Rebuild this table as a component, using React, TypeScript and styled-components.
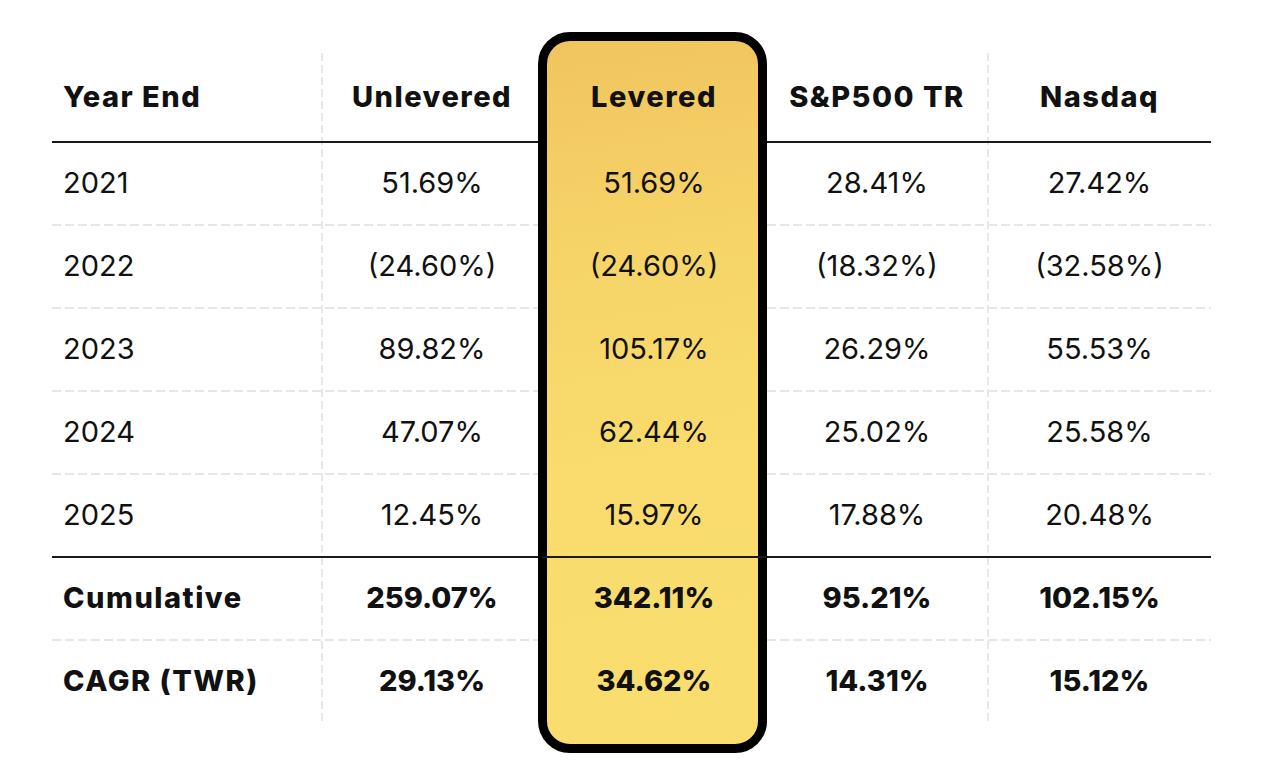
import React from 'react';
import styled, { createGlobalStyle } from 'styled-components';

const GlobalStyle = createGlobalStyle`
  html, body {
    margin: 0;
    padding: 0;
    background: #ffffff;
  }
  body {
    font-family: Inter, "Open Sans", "Liberation Sans", sans-serif;
    color: #111111;
  }
`;

const Page = styled.div`
  width: 1264px;
  height: 776px;
  padding: 53px 0 0 52px;
  box-sizing: border-box;
`;

const Table = styled.div`
  position: relative;
  width: 1159px;
  background-image:
    repeating-linear-gradient(to bottom, #e8e8e8 0 8px, transparent 8px 12px),
    repeating-linear-gradient(to bottom, #e8e8e8 0 8px, transparent 8px 12px);
  background-size: 2px 100%, 2px 100%;
  background-position: 269px 0, 935px 0;
  background-repeat: no-repeat;
`;

const Highlight = styled.div`
  position: absolute;
  left: 486px;
  top: -21px;
  width: 229px;
  height: 721px;
  box-sizing: border-box;
  border: 9px solid #000000;
  border-radius: 32px;
  background: linear-gradient(172deg, #f1c45e 0%, #f6d468 30%, #f9dc6d 60%, #f9dd6f 100%);
  z-index: 1;
`;

type LineKind = 'dashed' | 'solid' | 'none';

const lineImage = (kind: LineKind) => {
  if (kind === 'solid') return 'linear-gradient(#1a1a1a, #1a1a1a)';
  if (kind === 'dashed')
    return 'repeating-linear-gradient(to right, #e6e6e6 0 9px, transparent 9px 13px)';
  return 'none';
};

const Row = styled.div<{ $line: LineKind; $head?: boolean }>`
  display: grid;
  grid-template-columns: 270px 220px 224px 222px 223px;
  height: ${(p) => (p.$head ? 90 : 83)}px;
  background-image: ${(p) => lineImage(p.$line)};
  background-size: 100% 2px;
  background-position: 0 100%;
  background-repeat: no-repeat;
`;

const Cell = styled.div<{ $bold?: boolean; $label?: boolean; $first?: boolean; $rule?: boolean }>`
  position: relative;
  z-index: 2;
  display: flex;
  align-items: center;
  justify-content: ${(p) => (p.$first ? 'flex-start' : 'center')};
  padding-left: ${(p) => (p.$first ? '11px' : '0')};
  padding-bottom: 4px;
  font-size: 29px;
  line-height: 1;
  font-weight: ${(p) => (p.$bold ? 800 : 400)};
  letter-spacing: ${(p) => (p.$bold && p.$label ? '1.5px' : '0')};
  color: #111111;
  white-space: nowrap;
  box-shadow: ${(p) => (p.$rule ? 'inset 0 -2px 0 #1a1a1a' : 'none')};
`;

const headers = ['Year End', 'Unlevered', 'Levered', 'S&P500 TR', 'Nasdaq'];

type RowData = { label: string; values: string[]; bold?: boolean; line: LineKind };

const rows: RowData[] = [
  { label: '2021', values: ['51.69%', '51.69%', '28.41%', '27.42%'], line: 'dashed' },
  { label: '2022', values: ['(24.60%)', '(24.60%)', '(18.32%)', '(32.58%)'], line: 'dashed' },
  { label: '2023', values: ['89.82%', '105.17%', '26.29%', '55.53%'], line: 'dashed' },
  { label: '2024', values: ['47.07%', '62.44%', '25.02%', '25.58%'], line: 'dashed' },
  { label: '2025', values: ['12.45%', '15.97%', '17.88%', '20.48%'], line: 'solid' },
  { label: 'Cumulative', values: ['259.07%', '342.11%', '95.21%', '102.15%'], bold: true, line: 'dashed' },
  { label: 'CAGR (TWR)', values: ['29.13%', '34.62%', '14.31%', '15.12%'], bold: true, line: 'none' },
];

const App: React.FC = () => {
  return (
    <>
      <GlobalStyle />
      <Page>
        <Table>
          <Highlight />
          <Row $line="solid" $head>
            {headers.map((h, i) => (
              <Cell key={h} $bold $label $first={i === 0}>
                {h}
              </Cell>
            ))}
          </Row>
          {rows.map((r) => (
            <Row key={r.label} $line={r.line}>
              <Cell $first $label $bold={r.bold}>
                {r.label}
              </Cell>
              {r.values.map((v, i) => (
                <Cell key={i} $bold={r.bold} $rule={i === 1 && r.line === 'solid'}>
                  {v}
                </Cell>
              ))}
            </Row>
          ))}
        </Table>
      </Page>
    </>
  );
};

export default App;
